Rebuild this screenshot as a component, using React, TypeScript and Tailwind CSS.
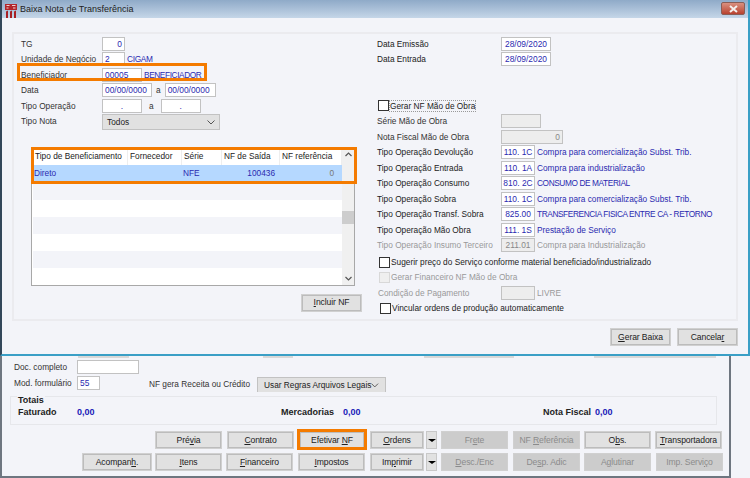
import React from "react";

const font = { fontFamily: '"Liberation Sans", Arial, sans-serif' };

function Btn({ children, w, off, className = "" }: { children: React.ReactNode; w: string; off?: boolean; className?: string }) {
  return (
    <div className={`${w} h-[18px] shrink-0 flex items-center justify-center border border-[#d0d0d0] outline outline-1 outline-[#bcbcbc] -outline-offset-2 text-[8.6px] tracking-[-0.1px] ${off ? "bg-[#cccccc] text-[#8b8b8b] border-[#cfcfcf] outline-[#cccccc]" : "bg-[#e1e1e1] text-[#222]"} ${className}`}>
      <span>{children}</span>
    </div>
  );
}

function Input({ w, children, align = "left", off }: { w: string; children?: React.ReactNode; align?: string; off?: boolean }) {
  return (
    <div className={`${w} h-[14px] shrink-0 border border-[#c2c2c2] flex items-center px-[2px] text-[8.4px] leading-none ${align === "right" ? "justify-end" : align === "center" ? "justify-center" : ""} ${off ? "bg-[#ededed] text-[#888]" : "bg-white text-[#2a2ab0]"}`}>
      {children}
    </div>
  );
}

function Box({ dim }: { dim?: boolean }) {
  return <div className={`w-[11px] h-[11px] shrink-0 border ${dim ? "border-[#d8d8d8] bg-[#efefef]" : "border-[#333] bg-white"}`} />;
}

function LeftRow({ label, children }: { label: string; children?: React.ReactNode }) {
  return (
    <div className="h-[15.5px] shrink-0 flex items-center">
      <div className="w-[81px] shrink-0 text-[#333]">{label}</div>
      {children}
    </div>
  );
}

function RightRow({ label, code, desc, off, caps }: { label: string; code: string; desc: string; off?: boolean; caps?: boolean }) {
  return (
    <div className="h-[15.5px] shrink-0 flex items-center">
      <div className={`w-[124px] shrink-0 ${off ? "text-[#999]" : "text-[#222]"}`}>{label}</div>
      <Input w="w-[34px]" align="center" off={off}>{code}</Input>
      <div className={`ml-[2px] ${caps ? "tracking-[-0.4px]" : ""} ${off ? "text-[#999]" : "text-[#2a2ab0]"}`}>{desc}</div>
    </div>
  );
}

const stripes = [0, 1, 2, 3, 4, 5];
const cols = "grid grid-cols-[95px_54px_40px_58px_62px] items-center";

export default function App() {
  return (
    <div style={font} className="w-[750px] h-[478px] overflow-hidden bg-[#f3f4f9] text-[8.3px] leading-none whitespace-nowrap flex flex-col">
      {/* Dialog */}
      <div className="relative h-[356px] shrink-0 flex flex-col border-l-2 border-r-2 border-b-2 border-l-[#33475a] border-r-[#3a9fc6] border-b-[#3a9fc6]">
        <div className="h-[18px] shrink-0 bg-gradient-to-b from-[#8faac8] to-[#c5d6e8] flex items-center pl-[3px] relative">
          <svg width="12" height="14" viewBox="0 0 12 14" className="shrink-0 mt-[3px]">
            <rect x="0" y="0" width="12" height="6" fill="#b3262a" />
            <path d="M1.5 1.5h3M7 1.5h3.5M1.5 4h2M8 4h2.5" stroke="#efd0d0" strokeWidth="1" />
            <path d="M1 7.5l2-1V14H1zM5 7.5l2-1V14H5zM9 7.5l2-1V14H9z" fill="#a81f24" />
          </svg>
          <span className="ml-[3px] text-[9px] text-[#222]">Baixa Nota de Transferência</span>
          <div className="absolute right-[3px] top-[2px] w-[24px] h-[13px] rounded-[2px] bg-gradient-to-b from-[#d9907f] to-[#b8402e] border border-[#8a5d55] flex items-center justify-center">
            <svg width="9" height="8" viewBox="0 0 9 8"><path d="M1 1l7 6M8 1l-7 6" stroke="#f4f0ee" strokeWidth="2" /></svg>
          </div>
        </div>

        <div className="flex-1 flex flex-col pt-[14px] pl-[10px] pr-[10px]">
          {/* panel */}
          <div className="h-[289px] shrink-0 border-2 border-[#ebebef] flex pt-[2px] pl-[7px]">
            {/* left col */}
            <div className="w-[356px] shrink-0 flex flex-col">
              <LeftRow label="TG"><Input w="w-[23px]" align="right">0</Input></LeftRow>
              <LeftRow label="Unidade de Negócio">
                <Input w="w-[23px]">2</Input>
                <span className="ml-[2px] text-[#2a2ab0] tracking-[-0.3px]">CIGAM</span>
              </LeftRow>
              <LeftRow label="Beneficiador">
                <Input w="w-[40px]">00005</Input>
                <span className="ml-[2px] text-[#2a2ab0] tracking-[-0.4px]">BENEFICIADOR</span>
              </LeftRow>
              <LeftRow label="Data">
                <Input w="w-[50px]">00/00/0000</Input>
                <span className="mx-[4px] text-[#333]">a</span>
                <Input w="w-[51px]">00/00/0000</Input>
              </LeftRow>
              <LeftRow label="Tipo Operação">
                <Input w="w-[40px]" align="center">.</Input>
                <span className="mx-[7px] text-[#333]">a</span>
                <Input w="w-[40px]" align="center">.</Input>
              </LeftRow>
              <div className="h-[17px] shrink-0 flex items-center">
                <div className="w-[81px] shrink-0 text-[#333] -mt-[1px]">Tipo Nota</div>
                <div className="w-[118px] h-[16px] bg-[#e1e1e1] border border-[#c2c2c2] flex items-center justify-between px-[4px] text-[#222]">
                  <span>Todos</span>
                  <svg width="8" height="5" viewBox="0 0 8 5"><path d="M.5.5L4 4 7.5.5" fill="none" stroke="#555" /></svg>
                </div>
              </div>

              {/* table */}
              <div className="ml-[10px] mt-[16px] w-[324px] h-[139px] border border-[#a8a8a8] bg-white flex pl-[1px]">
                <div className="w-[309px] flex flex-col">
                  <div className={`h-[17px] ${cols} text-[#222]`}>
                    {["Tipo de Beneficiamento", "Fornecedor", "Série", "NF de Saída", "NF referência"].map((t) => (
                      <div key={t} className="h-full flex items-center pl-[2px] border-r border-[#eeeeee] overflow-hidden">{t}</div>
                    ))}
                  </div>
                  <div className={`h-[18px] bg-[#b5d8ff] ${cols} text-[#2a2ab0]`}>
                    <div className="pl-[1px]">Direto</div>
                    <div />
                    <div className="pl-[1px]">NFE</div>
                    <div className="text-right pr-[5px]">100436</div>
                    <div className="text-right pr-[8px] text-[#777]">0</div>
                  </div>
                  {stripes.map((i) => (
                    <div key={i} className={`h-[17px] ${i % 2 === 0 ? "bg-[#f3f4f9]" : "bg-white"}`} />
                  ))}
                </div>
                <div className="w-[13px] bg-[#f0f0f0] flex flex-col justify-between items-center py-[4px] relative">
                  <svg width="7" height="5" viewBox="0 0 7 5"><path d="M.5 4L3.5 1l3 3" fill="none" stroke="#555" strokeWidth="1.2" /></svg>
                  <div className="absolute top-[63px] left-0 w-full h-[13px] bg-[#cdcdcd]" />
                  <svg width="7" height="5" viewBox="0 0 7 5"><path d="M.5 1l3 3 3-3" fill="none" stroke="#555" strokeWidth="1.2" /></svg>
                </div>
              </div>
              <div className="mt-[8px] ml-[280px]">
                <Btn w="w-[61px]"><u>I</u>ncluir NF</Btn>
              </div>
            </div>

            {/* right col */}
            <div className="flex-1 flex flex-col">
              <div className="h-[15.5px] shrink-0 flex items-center"><div className="w-[124px] text-[#222]">Data Emissão</div><Input w="w-[50px]" align="center">28/09/2020</Input></div>
              <div className="h-[15.5px] shrink-0 flex items-center"><div className="w-[124px] text-[#222]">Data Entrada</div><Input w="w-[50px]" align="center">28/09/2020</Input></div>
              <div className="h-[31px] shrink-0" />
              <div className="h-[15.5px] shrink-0 flex items-center pl-[1px]">
                <Box />
                <span className="py-[1px] border border-dotted border-[#999] text-[#222]">Gerar NF Mão de Obra</span>
              </div>
              <div className="h-[15.5px] shrink-0 flex items-center"><div className="w-[124px] text-[#333]">Série Mão de Obra</div><Input w="w-[40px]" off /></div>
              <div className="h-[15.5px] shrink-0 flex items-center"><div className="w-[124px] text-[#333]">Nota Fiscal Mão de Obra</div><Input w="w-[62px]" align="right" off>0</Input></div>
              <RightRow label="Tipo Operação Devolução" code="110. 1C" desc="Compra para comercialização Subst. Trib." />
              <RightRow label="Tipo Operação Entrada" code="110. 1A" desc="Compra para industrialização" />
              <RightRow label="Tipo Operação Consumo" code="810. 2C" desc="CONSUMO DE MATERIAL" caps />
              <RightRow label="Tipo Operação Sobra" code="110. 1C" desc="Compra para comercialização Subst. Trib." />
              <RightRow label="Tipo Operação Transf. Sobra" code="825.00" desc="TRANSFERENCIA FISICA ENTRE CA - RETORNO" caps />
              <RightRow label="Tipo Operação Mão Obra" code="111. 1S" desc="Prestação de Serviço" />
              <RightRow label="Tipo Operação Insumo Terceiro" code="211.01" desc="Compra para Industrialização" off />
              <div className="h-[16px] mt-[1px] shrink-0 flex items-center pl-[2px] text-[#222]"><Box /><span className="ml-[1px]">Sugerir preço do Serviço conforme material beneficiado/industrializado</span></div>
              <div className="h-[15px] shrink-0 flex items-center pl-[2px] text-[#999]"><Box dim /><span className="ml-[1px]">Gerar Financeiro NF Mão de Obra</span></div>
              <div className="h-[15.5px] shrink-0 flex items-center text-[#999]">
                <div className="w-[124px] pl-[1px]">Condição de Pagamento</div>
                <Input w="w-[34px]" off />
                <span className="ml-[2px]">LIVRE</span>
              </div>
              <div className="h-[16px] shrink-0 flex items-center pl-[3px] text-[#222]"><Box /><span className="ml-[1px]">Vincular ordens de produção automaticamente</span></div>
            </div>
          </div>

          <div className="mt-[7px] flex justify-end gap-[6px]">
            <Btn w="w-[61px]"><u>G</u>erar Baixa</Btn>
            <Btn w="w-[61px]">Cancela<u>r</u></Btn>
          </div>
        </div>

        {/* highlights */}
        <div className="absolute left-[15px] top-[63px] w-[190px] h-[18px] border-[3px] border-[#f47b00]" />
        <div className="absolute left-[29px] top-[147px] w-[326px] h-[37px] border-[3px] border-[#f47b00]" />
      </div>

      {/* Underlying window */}
      <div className="relative flex-1 w-[731px] flex flex-col border-l-2 border-r-2 border-b-2 border-[#6e7680]">
        <div className="h-[2px] shrink-0 flex">
          <div className="ml-[76px] w-[51px] bg-[#d8d8d8]" />
          <div className="ml-[134px] w-[30px] bg-[#d8d8d8]" />
          <div className="ml-[131px] w-[90px] bg-[#d8d8d8]" />
          <div className="ml-[80px] w-[122px] bg-[#d8d8d8]" />
        </div>
        <div className="h-[16px] mt-[1px] flex items-center pl-[12px]">
          <div className="w-[63px] text-[#333]">Doc. completo</div>
          <div className="w-[62px] h-[14px] bg-white border border-[#c2c2c2]" />
        </div>
        <div className="h-[16px] flex items-center pl-[12px]">
          <div className="w-[63px] text-[#333]">Mod. formulário</div>
          <Input w="w-[23px]">55</Input>
          <div className="ml-[49px] mt-[2px] w-[108px] text-[#333]">NF gera Receita ou Crédito</div>
          <div className="mt-[3px] w-[129px] h-[15px] bg-[#e1e1e1] border border-[#c2c2c2] border-b-0 flex items-center justify-between px-[6px] text-[#222]">
            <span>Usar Regras Arquivos Legais</span>
            <svg width="8" height="5" viewBox="0 0 8 5"><path d="M.5.5L4 4 7.5.5" fill="none" stroke="#555" /></svg>
          </div>
        </div>
        <div className="relative ml-[8px] mt-[5px] w-[707px] h-[29px] shrink-0 border border-[#e6e7eb] flex items-center pt-[3px] font-bold text-[9px] text-[#222]">
          <span className="absolute left-[6px] -top-[1px] bg-[#f3f4f9] px-[1px]">Totais</span>
          <div className="w-[59px] ml-[7px]">Faturado</div>
          <div className="w-[204px] text-[#2020b8]">0,00</div>
          <div className="w-[62px]">Mercadorias</div>
          <div className="w-[200px] text-[#2020b8]">0,00</div>
          <div className="w-[52px]">Nota Fiscal</div>
          <div className="text-[#2020b8]">0,00</div>
        </div>
        <div className="mt-[6px] flex pl-[153px] gap-[5px]">
          <Btn w="w-[67px]">Pré<u>v</u>ia</Btn>
          <Btn w="w-[67px]"><u>C</u>ontrato</Btn>
          <div className="relative"><Btn w="w-[66px]">Efetivar <u>N</u>F</Btn><div className="absolute -inset-x-[2px] -top-[2px] -bottom-[1px] border-[3px] border-[#f47b00]" /></div>
          <Btn w="w-[54px]"><u>O</u>rdens</Btn>
          <div className="-ml-[3px] w-[11px] h-[18px] bg-[#e1e1e1] border border-[#c8c8c8] flex items-center justify-center"><div className="w-0 h-0 border-x-[4px] border-x-transparent border-t-[3px] border-t-black" /></div>
          <Btn w="w-[67px]" off className="-ml-[1px]">Fr<u>e</u>te</Btn>
          <Btn w="w-[67px]" off>NF <u>R</u>eferência</Btn>
          <Btn w="w-[67px]" className="-ml-[1px]">O<u>b</u>s.</Btn>
          <Btn w="w-[67px]" className="-ml-[1px]"><u>T</u>ransportadora</Btn>
        </div>
        <div className="mt-[4px] flex pl-[80px] gap-[3px]">
          <Btn w="w-[70px]">Acompan<u>h</u>.</Btn>
          <Btn w="w-[67px]"><u>I</u>tens</Btn>
          <Btn w="w-[67px]" className="ml-[1px]"><u>F</u>inanceiro</Btn>
          <Btn w="w-[67px]" className="ml-[2px]"><u>I</u>mpostos</Btn>
          <Btn w="w-[54px]" className="ml-[2px]">Im<u>p</u>rimir</Btn>
          <div className="-ml-[1px] w-[11px] h-[18px] bg-[#e1e1e1] border border-[#c8c8c8] flex items-center justify-center"><div className="w-0 h-0 border-x-[4px] border-x-transparent border-t-[3px] border-t-black" /></div>
          <Btn w="w-[67px]" off className="ml-[1px]"><u>D</u>esc./Enc</Btn>
          <Btn w="w-[67px]" off className="ml-[2px]">De<u>s</u>p. Adic</Btn>
          <Btn w="w-[67px]" off className="ml-[1px]">A<u>g</u>lutinar</Btn>
          <Btn w="w-[67px]" off className="ml-[2px]">Imp. Servi<u>ç</u>o</Btn>
        </div>
      </div>
    </div>
  );
}
